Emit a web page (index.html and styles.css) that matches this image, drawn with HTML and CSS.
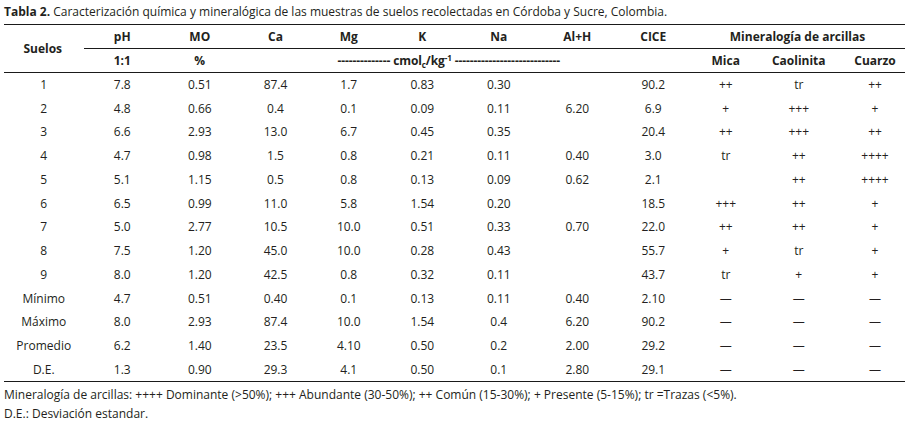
FILE: index.html
```html
<!DOCTYPE html>
<html lang="es">
<head>
<meta charset="utf-8">
<title>Tabla 2</title>
<link rel="stylesheet" href="styles.css">
</head>
<body>
<div class="page">
  <p class="caption"><b>Tabla 2.</b> Caracterización química y mineralógica de las muestras de suelos recolectadas en Córdoba y Sucre, Colombia.</p>
  <table class="data">
    <colgroup>
      <col class="c0"><col class="c1"><col class="c2"><col class="c3"><col class="c4"><col class="c5">
      <col class="c6"><col class="c7"><col class="c8"><col class="c9"><col class="c10"><col class="c11">
    </colgroup>
    <thead>
      <tr class="h1">
        <th rowspan="2" class="suelos">Suelos</th>
        <th>pH</th><th>MO</th><th>Ca</th><th>Mg</th><th>K</th><th>Na</th><th>Al+H</th><th>CICE</th>
        <th colspan="3">Mineralogía de arcillas</th>
      </tr>
      <tr class="h2">
        <th>1:1</th><th>%</th>
        <th colspan="6" class="units">-------------- cmol<sub>c</sub>/kg<sup>-1</sup> ----------------------------</th>
        <th>Mica</th><th>Caolinita</th><th class="last">Cuarzo</th>
      </tr>
    </thead>
    <tbody>
      <tr><td>1</td><td>7.8</td><td>0.51</td><td>87.4</td><td>1.7</td><td>0.83</td><td>0.30</td><td></td><td>90.2</td><td>++</td><td>tr</td><td class="last">++</td></tr>
      <tr><td>2</td><td>4.8</td><td>0.66</td><td>0.4</td><td>0.1</td><td>0.09</td><td>0.11</td><td>6.20</td><td>6.9</td><td>+</td><td>+++</td><td class="last">+</td></tr>
      <tr><td>3</td><td>6.6</td><td>2.93</td><td>13.0</td><td>6.7</td><td>0.45</td><td>0.35</td><td></td><td>20.4</td><td>++</td><td>+++</td><td class="last">++</td></tr>
      <tr><td>4</td><td>4.7</td><td>0.98</td><td>1.5</td><td>0.8</td><td>0.21</td><td>0.11</td><td>0.40</td><td>3.0</td><td>tr</td><td>++</td><td class="last">++++</td></tr>
      <tr><td>5</td><td>5.1</td><td>1.15</td><td>0.5</td><td>0.8</td><td>0.13</td><td>0.09</td><td>0.62</td><td>2.1</td><td></td><td>++</td><td class="last">++++</td></tr>
      <tr><td>6</td><td>6.5</td><td>0.99</td><td>11.0</td><td>5.8</td><td>1.54</td><td>0.20</td><td></td><td>18.5</td><td>+++</td><td>++</td><td class="last">+</td></tr>
      <tr><td>7</td><td>5.0</td><td>2.77</td><td>10.5</td><td>10.0</td><td>0.51</td><td>0.33</td><td>0.70</td><td>22.0</td><td>++</td><td>++</td><td class="last">+</td></tr>
      <tr><td>8</td><td>7.5</td><td>1.20</td><td>45.0</td><td>10.0</td><td>0.28</td><td>0.43</td><td></td><td>55.7</td><td>+</td><td>tr</td><td class="last">+</td></tr>
      <tr><td>9</td><td>8.0</td><td>1.20</td><td>42.5</td><td>0.8</td><td>0.32</td><td>0.11</td><td></td><td>43.7</td><td>tr</td><td>+</td><td class="last">+</td></tr>
      <tr><td>Mínimo</td><td>4.7</td><td>0.51</td><td>0.40</td><td>0.1</td><td>0.13</td><td>0.11</td><td>0.40</td><td>2.10</td><td>—</td><td>—</td><td class="last">—</td></tr>
      <tr><td>Máximo</td><td>8.0</td><td>2.93</td><td>87.4</td><td>10.0</td><td>1.54</td><td>0.4</td><td>6.20</td><td>90.2</td><td>—</td><td>—</td><td class="last">—</td></tr>
      <tr><td>Promedio</td><td>6.2</td><td>1.40</td><td>23.5</td><td>4.10</td><td>0.50</td><td>0.2</td><td>2.00</td><td>29.2</td><td>—</td><td>—</td><td class="last">—</td></tr>
      <tr><td>D.E.</td><td>1.3</td><td>0.90</td><td>29.3</td><td>4.1</td><td>0.50</td><td>0.1</td><td>2.80</td><td>29.1</td><td>—</td><td>—</td><td class="last">—</td></tr>
    </tbody>
  </table>
  <div class="notes">
    <p>Mineralogía de arcillas: ++++ Dominante (&gt;50%); +++ Abundante (30-50%); ++ Común (15-30%); + Presente (5-15%); tr =Trazas (&lt;5%).</p>
    <p>D.E.: Desviación estandar.</p>
  </div>
</div>
</body>
</html>
```

FILE: styles.css
```css
html, body {
  margin: 0;
  padding: 0;
  background: #ffffff;
}

body {
  font-family: "Open Sans", "Noto Sans", sans-serif;
  font-size: 12px;
  color: #231f20;
}

.page {
  width: 901px;
  padding: 3px 4px 0 4px;
}

.caption {
  margin: 0;
  height: 21px;
  line-height: 18px;
}

.caption b {
  font-weight: 700;
}

.data {
  width: 901px;
  table-layout: fixed;
  border-collapse: collapse;
  border-top: 1px solid #1a1a1a;
  border-bottom: 1px solid #1a1a1a;
}

.c0 { width: 79.5px; }
.c1 { width: 77.5px; }
.c2 { width: 77.5px; }
.c3 { width: 74px; }
.c4 { width: 72.5px; }
.c5 { width: 74.5px; }
.c6 { width: 78.5px; }
.c7 { width: 78.5px; }
.c8 { width: 73.5px; }
.c9 { width: 71.5px; }
.c10 { width: 74.5px; }
.c11 { width: 69px; }

th, td {
  padding: 0;
  text-align: center;
  white-space: nowrap;
}

th {
  font-weight: 700;
}

thead tr {
  height: 24px;
}

.h1 th {
  border-bottom: 1px solid #1a1a1a;
}

.h1 th.suelos {
  padding-right: 2px;
}

.h2 th {
  border-bottom: 1px solid #1a1a1a;
}

.units {
  text-align: left;
  padding-left: 99px;
  letter-spacing: -0.1px;
}

.units sub {
  font-size: 8px;
  vertical-align: -3px;
  line-height: 0;
}

.units sup {
  font-size: 8px;
  vertical-align: 4px;
  line-height: 0;
}

.last {
  padding-left: 9px;
}

tbody tr {
  height: 23.75px;
}

td {
  font-weight: 400;
}

.notes {
  padding-top: 3px;
}

.notes p {
  margin: 0;
  line-height: 19px;
}
```
